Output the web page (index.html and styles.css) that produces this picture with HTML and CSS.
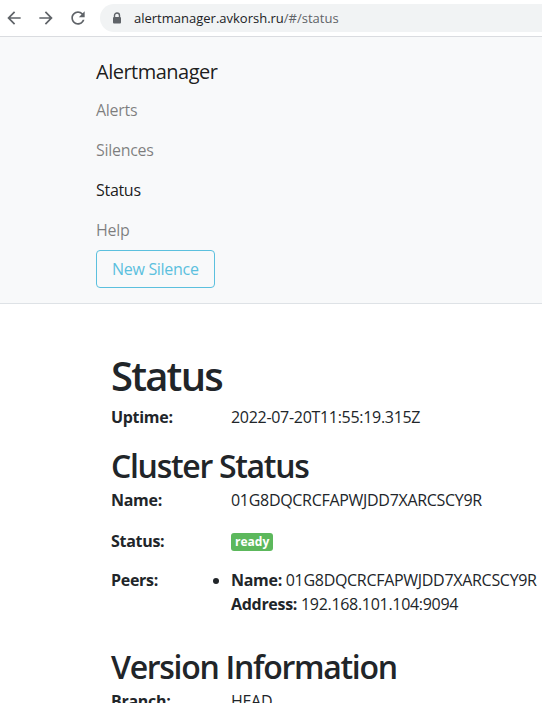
FILE: index.html
```html
<!DOCTYPE html>
<html lang="en">
<head>
<meta charset="utf-8">
<title>Alertmanager</title>
<link rel="stylesheet" href="styles.css">
</head>
<body>
<div class="chrome">
  <div class="nav-btns">
    <svg class="ico" viewBox="0 0 24 24"><path d="M20 11H7.83l5.59-5.59L12 4l-8 8 8 8 1.41-1.41L7.830 13H20v-2z"/></svg>
    <svg class="ico" viewBox="0 0 24 24"><path d="M4 11h12.17l-5.59-5.59L12 4l8 8-8 8-1.41-1.41L16.17 13H4v-2z"/></svg>
    <svg class="ico" viewBox="0 0 24 24"><path d="M17.65 6.35C16.2 4.9 14.21 4 12 4c-4.42 0-7.99 3.58-7.99 8s3.57 8 7.99 8c3.73 0 6.84-2.55 7.73-6h-2.08c-.82 2.33-3.04 4-5.65 4-3.31 0-6-2.69-6-6s2.69-6 6-6c1.66 0 3.14.69 4.22 1.78L13 11h7V4l-2.35 2.35z"/></svg>
  </div>
  <div class="omnibox">
    <svg class="lock" viewBox="0 0 10 12"><path d="M2.5 5V3.5a2.5 2.5 0 0 1 5 0V5" fill="none" stroke="#5f6368" stroke-width="1.4"/><rect x="1" y="5" width="8" height="6.5" rx="1" fill="#5f6368"/></svg>
    <span class="url">alertmanager.avkorsh.ru<span class="url-path">/#/status</span></span>
  </div>
</div>
<nav class="navbar">
  <div class="brand">Alertmanager</div>
  <ul class="nav-list">
    <li class="nav-link">Alerts</li>
    <li class="nav-link">Silences</li>
    <li class="nav-link active">Status</li>
    <li class="nav-link">Help</li>
  </ul>
  <div class="btn-wrap"><span class="btn-outline">New Silence</span></div>
</nav>
<main class="content">
  <h1 class="h1">Status</h1>
  <div class="row row-uptime"><div class="label">Uptime:</div><div class="value">2022-07-20T11:55:19.315Z</div></div>
  <h2 class="h2">Cluster Status</h2>
  <div class="row row-name"><div class="label">Name:</div><div class="value">01G8DQCRCFAPWJDD7XARCSCY9R</div></div>
  <div class="row row-status"><div class="label">Status:</div><div class="value"><span class="badge">ready</span></div></div>
  <div class="row row-peers"><div class="label">Peers:</div>
    <div class="value">
      <ul class="peers">
        <li><b>Name:</b> 01G8DQCRCFAPWJDD7XARCSCY9R<br><b>Address:</b> 192.168.101.104:9094</li>
      </ul>
    </div>
  </div>
  <h2 class="h2 h2-version">Version Information</h2>
  <div class="row"><div class="label">Branch:</div><div class="value">HEAD</div></div>
</main>
</body>
</html>
```
FILE: styles.css
```css
html, body {
  margin: 0;
  padding: 0;
  background: #fff;
}
body {
  font-family: "Open Sans", "Noto Sans", sans-serif;
  color: #212529;
  font-size: 16px;
  line-height: 24px;
  letter-spacing: -0.3px;
  overflow: hidden;
}
.chrome {
  height: 36px;
  border-bottom: 1px solid #dadce0;
  display: flex;
  align-items: center;
  background: #fff;
}
.nav-btns {
  display: flex;
  gap: 12px;
  padding-left: 4px;
  width: 96px;
}
.ico {
  width: 20px;
  height: 20px;
  fill: #5f6368;
}
.omnibox {
  flex: 1;
  height: 28px;
  margin-top: -1px;
  background: #f1f3f4;
  border-radius: 14px 0 0 14px;
  display: flex;
  align-items: center;
  padding-left: 12px;
}
.lock {
  width: 10px;
  height: 12px;
}
.url {
  margin-left: 12px;
  font-size: 13px;
  letter-spacing: 0;
  color: #202124;
}
.url-path {
  color: #5f6368;
}
.navbar {
  background: #f8f9fa;
  border-bottom: 1px solid #dee2e6;
  padding: 14px 0 15px 96px;
}
.brand {
  font-size: 20px;
  line-height: 30px;
  padding: 6px 0 3px;
  letter-spacing: -0.5px;
  color: rgba(0,0,0,.9);
}
.nav-list {
  list-style: none;
  margin: 0;
  padding: 0;
}
.nav-link {
  padding: 8px 0;
  color: rgba(0,0,0,.5);
}
.nav-link.active {
  color: rgba(0,0,0,.9);
}
.btn-wrap {
  display: flex;
}
.btn-outline {
  display: inline-block;
  border: 1px solid #5bc0de;
  border-radius: 4px;
  padding: 6px 15px;
  color: #5bc0de;
}
.content {
  padding: 48px 0 0 111px;
}
.h1 {
  margin: 0 0 5px;
  font-size: 40px;
  line-height: 48px;
  font-weight: 600;
  letter-spacing: -1.8px;
}
.h2 {
  margin: 0 0 3px;
  font-size: 32px;
  line-height: 38px;
  font-weight: 600;
  letter-spacing: -1.3px;
}
.row {
  display: flex;
  margin-bottom: 16px;
}
.row-uptime { margin-bottom: 18px; }
.row-name { margin-bottom: 17px; }
.row-status { margin-bottom: 15px; }
.row-peers { margin-bottom: 32px; }
.label {
  width: 120px;
  flex: none;
  font-weight: 700;
}
.value {
  white-space: nowrap;
}
.badge {
  display: inline-block;
  background: #5cb85c;
  color: #fff;
  font-size: 12px;
  font-weight: 700;
  line-height: 16px;
  padding: 1px 4px;
  border-radius: 3px;
  letter-spacing: 0;
  vertical-align: 1px;
}
.peers {
  margin: 0;
  padding: 0;
  list-style: disc outside;
}
```
